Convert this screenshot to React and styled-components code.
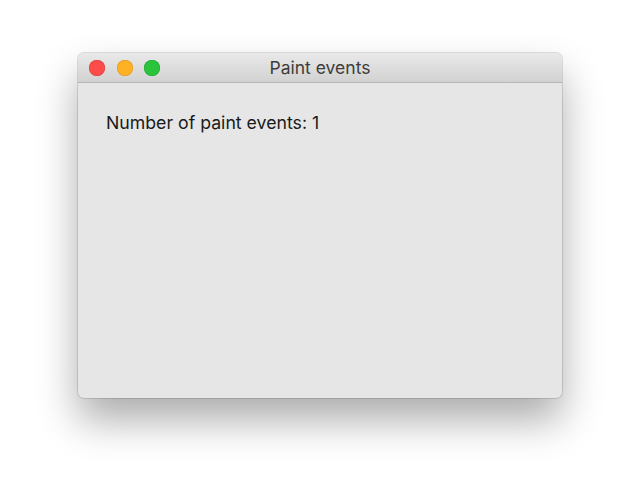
import React from 'react';
import styled, { createGlobalStyle } from 'styled-components';

const GlobalStyle = createGlobalStyle`
  html, body {
    margin: 0;
    background: #ffffff;
    font-family: "Inter", "Liberation Sans", sans-serif;
  }
`;

const Page = styled.div`
  width: 640px;
  height: 501px;
  display: flex;
  justify-content: center;
  padding-top: 53px;
  box-sizing: border-box;
`;

const Window = styled.div`
  width: 484px;
  height: 345px;
  display: flex;
  flex-direction: column;
  border-radius: 6px;
  overflow: hidden;
  background: #e6e6e6;
  box-shadow: 0 0 0 1px rgba(0, 0, 0, 0.12), 0 22px 40px rgba(0, 0, 0, 0.33);
`;

const TitleBar = styled.div`
  height: 29px;
  display: flex;
  align-items: center;
  padding-left: 11px;
  position: relative;
  background: linear-gradient(#e9e9e9, #d2d2d2);
  border-bottom: 1px solid #b6b6b6;
`;

const Lights = styled.div`
  display: flex;
  gap: 11.5px;
`;

const Light = styled.span`
  width: 16px;
  height: 16px;
  border-radius: 50%;
  background: ${p => p.color};
  box-shadow: inset 0 0 0 0.5px ${p => p.edge};
`;

const Title = styled.div`
  position: absolute;
  left: 0;
  right: 0;
  top: 5px;
  text-align: center;
  font-size: 17.5px;
  line-height: 20px;
  color: #3d3d3d;
  pointer-events: none;
`;

const Content = styled.div`
  padding: 29px 28px;
  font-size: 17.7px;
  color: #1a1a1a;
`;

export default function App() {
  return (
    <>
      <GlobalStyle />
      <Page>
        <Window>
          <TitleBar>
            <Lights>
              <Light color="#fc4d4a" edge="#de3a37" />
              <Light color="#fdb124" edge="#de9718" />
              <Light color="#2ac33c" edge="#1fa42d" />
            </Lights>
            <Title>Paint events</Title>
          </TitleBar>
          <Content>Number of paint events: 1</Content>
        </Window>
      </Page>
    </>
  );
}
